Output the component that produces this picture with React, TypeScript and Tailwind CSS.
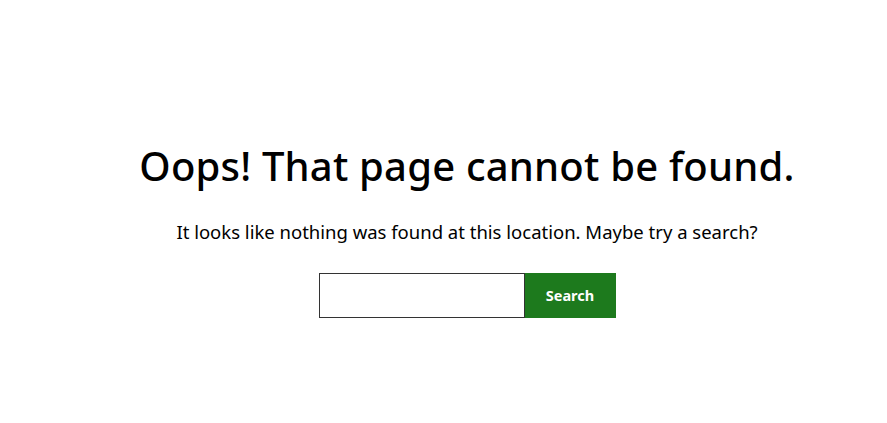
export default function App() {
  return (
    <div className="min-h-[423px] bg-white pl-[47px] font-['Noto_Sans',sans-serif] text-black">
      <main className="flex flex-col items-center pt-[138px]">
        <h1 className="text-[40px] leading-[56px] font-medium tracking-[0.2px]">
          Oops! That page cannot be found.
        </h1>
        <p className="mt-[24px] text-[18.5px] leading-[28px]">
          It looks like nothing was found at this location. Maybe try a search?
        </p>
        <form className="mt-[27px] flex" onSubmit={(e) => e.preventDefault()}>
          <input
            type="search"
            aria-label="Search"
            className="h-[45px] w-[206px] border border-[#333333] bg-white px-2 outline-none"
          />
          <button
            type="submit"
            className="h-[45px] w-[91px] bg-[#1d7a1d] text-[14.5px] font-bold text-white"
          >
            Search
          </button>
        </form>
      </main>
    </div>
  );
}
